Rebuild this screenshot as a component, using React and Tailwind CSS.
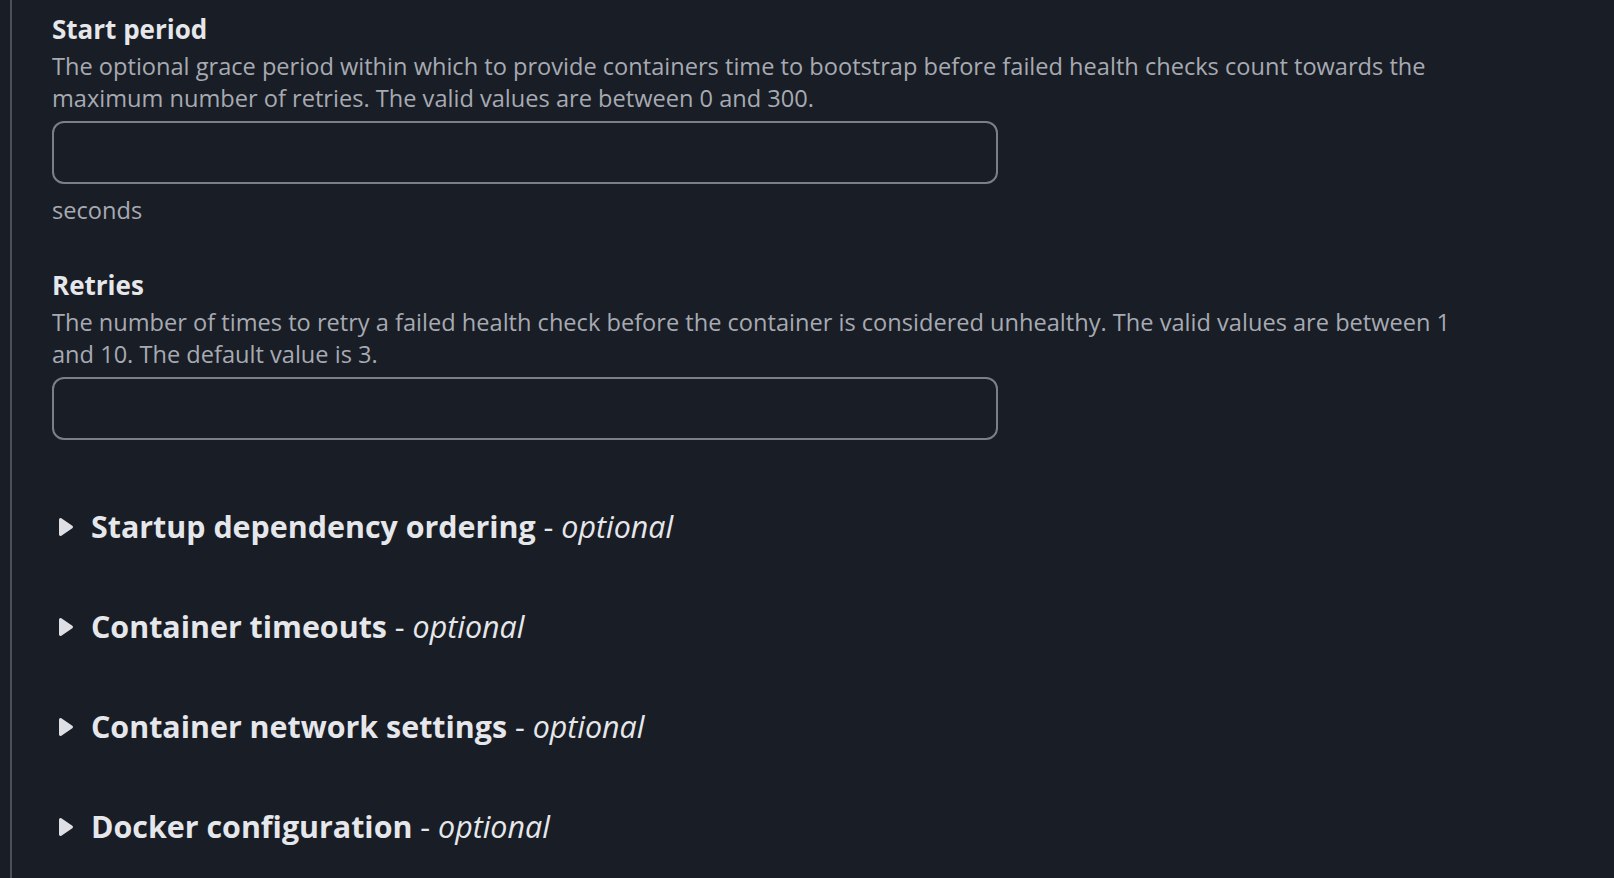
import React from "react";

const font = { fontFamily: "'Open Sans', 'Noto Sans', sans-serif" };

const Field = ({ label, lines, hint, className = "" }) => (
  <div className={className}>
    <div className="text-[26px] leading-[32px] font-bold text-[#e6e7eb]">{label}</div>
    <p className="mt-[5px] whitespace-nowrap text-[23.6px] leading-[32px] text-[#a7aab2]">
      {lines.map((l, i) => (
        <React.Fragment key={i}>
          {l}
          {i < lines.length - 1 && <br />}
        </React.Fragment>
      ))}
    </p>
    <input
      type="text"
      className="mt-[7px] block h-[63px] w-[946px] rounded-[12px] border-2 border-[#7b7f89] bg-transparent px-4 text-[23px] text-[#e9ebed] outline-none"
    />
    {hint && <div className="mt-[10px] text-[23.6px] leading-[32px] text-[#a7aab2]">{hint}</div>}
  </div>
);

const Section = ({ title }) => (
  <button className="flex h-[40px] items-center gap-[17px] text-left text-[#e6e7eb]">
    <svg width="16" height="20" viewBox="0 0 16 20" className="ml-[6px] shrink-0">
      <path d="M2.5 2.5 L13.5 10 L2.5 17.5 Z" fill="#dedfe4" stroke="#dedfe4" strokeWidth="3" strokeLinejoin="round" />
    </svg>
    <span className="whitespace-nowrap text-[30.4px] font-bold leading-[40px]">
      {title}
      <span className="font-normal"> - </span>
      <i className="font-normal">optional</i>
    </span>
  </button>
);

export default function App() {
  return (
    <div className="flex h-[878px] w-full overflow-hidden bg-[#191d25]" style={font}>
      <div className="ml-[10px] w-[2px] shrink-0 bg-[#4b505a]" />
      <div className="flex-1 pl-[40px] pt-[13px]">
        <Field
          label="Start period"
          lines={[
            "The optional grace period within which to provide containers time to bootstrap before failed health checks count towards the",
            "maximum number of retries. The valid values are between 0 and 300.",
          ]}
          hint="seconds"
        />
        <Field
          className="mt-[43px]"
          label="Retries"
          lines={[
            "The number of times to retry a failed health check before the container is considered unhealthy. The valid values are between 1",
            "and 10. The default value is 3.",
          ]}
        />
        <div className="mt-[67px] flex flex-col gap-[60px]">
          <Section title="Startup dependency ordering" />
          <Section title="Container timeouts" />
          <Section title="Container network settings" />
          <Section title="Docker configuration" />
        </div>
      </div>
    </div>
  );
}
